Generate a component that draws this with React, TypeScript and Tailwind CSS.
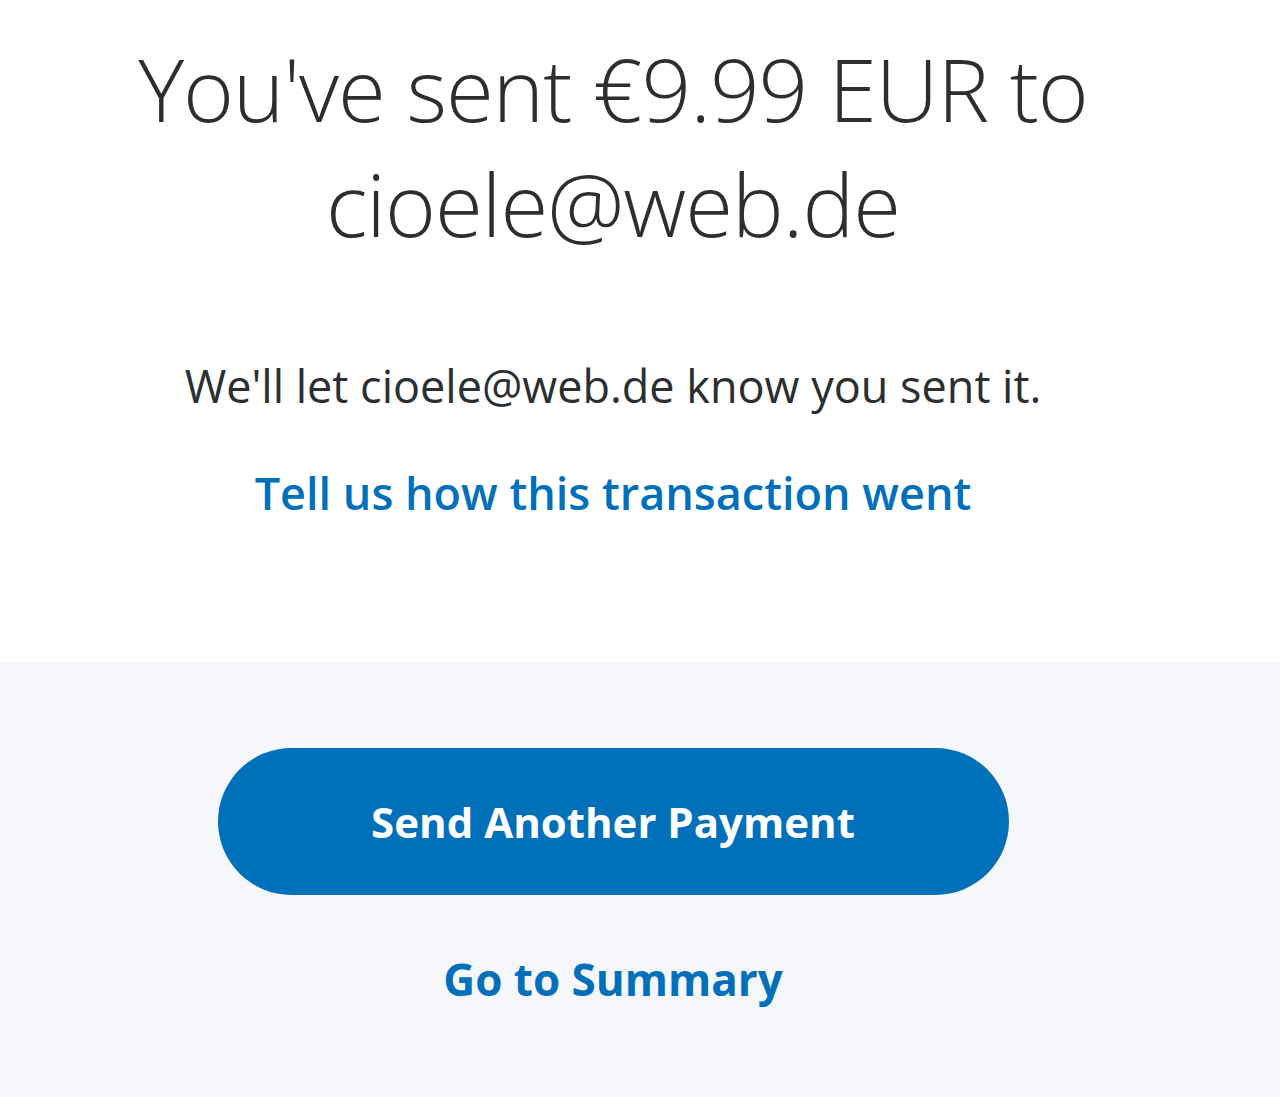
export default function App() {

 return (

  <div
   className="
    min-h-[1097px]
    bg-[#f5f7fa]
    font-['Open_Sans',sans-serif]
   "
  >

   {/* TOP: CONFIRMATION */}

   <div className="bg-white h-[662px]">

    <div
     className="
      w-[1226px]
      flex
      flex-col
      items-center
      text-center
      pt-[31px]
     "
    >

     <h1
      className="
       text-[87px]
       leading-[115px]
       font-light
       text-[#2c2e2f]
       tracking-[-1px]
      "
     >

      You've sent €9.99 EUR to
      <br />
      cioele@web.de

     </h1>


     <p
      className="
       mt-[97px]
       text-[45px]
       leading-[56px]
       text-[#2c2e2f]
      "
     >

      We'll let cioele@web.de know you sent it.

     </p>


     <a
      href="#"
      className="
       mt-[51px]
       text-[45px]
       leading-[56px]
       font-semibold
       text-[#0070ba]
      "
     >

      Tell us how this transaction went

     </a>

    </div>

   </div>


   {/* BOTTOM: ACTIONS */}

   <div
    className="
     w-[1226px]
     flex
     flex-col
     items-center
     pt-[86px]
    "
   >

    <button
     className="
      w-[791px]
      h-[147px]
      rounded-full
      bg-[#0070ba]
      text-white
      text-[42px]
      font-bold
     "
    >

     Send Another Payment

    </button>


    <a
     href="#"
     className="
      mt-[54px]
      text-[44px]
      leading-[60px]
      font-bold
      text-[#0070ba]
     "
    >

     Go to Summary

    </a>

   </div>

  </div>

 )
}
